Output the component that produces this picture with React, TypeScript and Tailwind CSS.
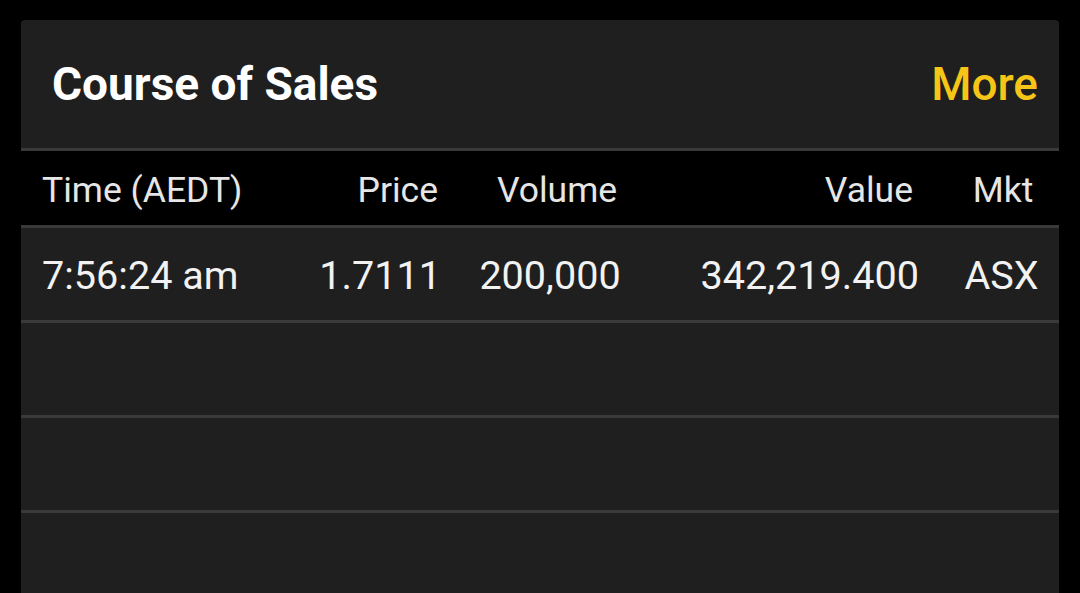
const trades = [
  { time: "7:56:24 am", price: "1.7111", volume: "200,000", value: "342,219.400", mkt: "ASX" },
];

const emptyRows = 3;

type Row = { time: string; price: string; volume: string; value: string; mkt: string };

const Cells = ({ row, head }: { row: Row; head?: boolean }) => (
  <>
    <div className="w-[279px] pl-[21px]">{row.time}</div>
    <div className={head ? "w-[138px] text-right" : "w-[141px] text-right"}>{row.price}</div>
    <div className={head ? "w-[238px] text-center" : "w-[218px] text-center"}>{row.volume}</div>
    <div className={head ? "w-[237px] text-right" : "w-[260px] text-right"}>{row.value}</div>
    <div className={head ? "flex-1 pl-[34px] text-center" : "flex-1 pl-[25px] text-center"}>{row.mkt}</div>
  </>
);

export default function App() {
  return (
    <div
      className="h-[593px] overflow-hidden bg-black px-[21px] pt-[20px]"
      style={{ fontFamily: "Roboto, 'Liberation Sans', sans-serif" }}
    >
      <div className="rounded-t-[4px] bg-[#1f1f1f]">
        {/* card title */}
        <div className="flex h-[128px] items-center justify-between pl-[31px] pr-[21px]">
          <h2 className="text-[46px] font-bold text-white">Course of Sales</h2>
          <button className="text-[46px] font-medium text-[#f5c518]">More</button>
        </div>

        {/* column headings */}
        <div className="flex h-[77px] items-center border-t-[3px] border-[#3a3a3a] bg-black pt-[5px] text-[35.5px] text-[#e6e6e6]">
          <Cells head row={{ time: "Time (AEDT)", price: "Price", volume: "Volume", value: "Value", mkt: "Mkt" }} />
        </div>

        {trades.map((t) => (
          <div
            key={t.time}
            className="flex h-[95px] items-center border-t-[3px] border-[#3a3a3a] pt-[4px] text-[39.6px] text-[#f2f2f2]"
          >
            <Cells row={t} />
          </div>
        ))}

        {Array.from({ length: emptyRows }).map((_, i) => (
          <div key={i} className="h-[95px] border-t-[3px] border-[#3a3a3a]" />
        ))}
      </div>
    </div>
  );
}
